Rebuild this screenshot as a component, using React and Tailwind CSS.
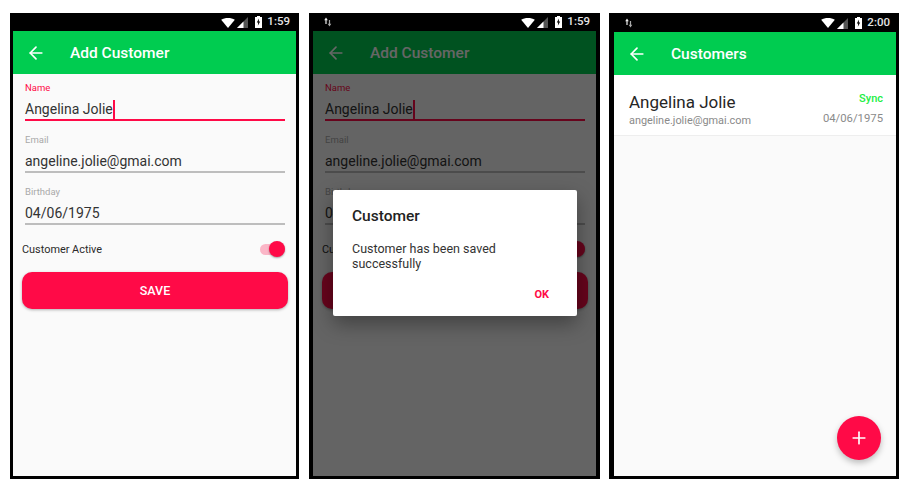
import React from 'react';
import { ArrowLeft, Plus } from 'lucide-react';

const StatusBar = ({ time, sync, className = '' }) => (
  <div className={`h-[18px] shrink-0 flex items-center justify-between bg-black text-[#e4e4e4] ${className}`}>
    <div className="pl-[11px]">
      {/* Data transfer arrows */}
      {sync && (
        <svg width="8" height="10" viewBox="0 0 8 10">
          <path d="M2 0.5 L0.2 3.2 H1.4 V7 H2.6 V3.2 H3.8 Z" fill="#eee" />
          <path d="M5.5 9.5 L3.7 6.8 H4.9 V3 H6.1 V6.8 H7.3 Z" fill="#aaa" />
        </svg>
      )}
    </div>
    <div className="flex items-center pr-[6px]">
      {/* Wifi */}
      <svg width="14" height="10" viewBox="0 0 15 11" className="mr-[2px] mt-[1px]">
        <path d="M0 1.8 C4 -0.6 11 -0.6 15 1.8 L7.5 11 Z" fill="#fff" />
      </svg>
      {/* Signal */}
      <svg width="11" height="11" viewBox="0 0 11 11" className="mr-[7px] mt-[1px]">
        <path d="M0 11 L11 0 V11 Z" fill="#555" />
        <path d="M0 11 L6.5 4.5 V11 Z" fill="#fff" />
      </svg>
      {/* Battery charging */}
      <svg width="7" height="12" viewBox="0 0 7 12" className="mr-[5px]">
        <path d="M2 0 H5 V1 H7 V12 H0 V1 H2 Z" fill="#fff" />
        <path d="M4 2.5 L1.8 6.6 H3.2 L2.8 9.8 L5.2 5.4 H3.8 Z" fill="#000" />
      </svg>
      <span className="text-[11.5px] leading-none font-medium w-[23px] text-right">{time}</span>
    </div>
  </div>
);

const AppBar = ({ title, className = '' }) => (
  <div className={`h-[43px] shrink-0 bg-[#00cc50] flex items-center text-white ${className}`}>
    <ArrowLeft className="w-[20px] h-[20px] ml-[13px]" strokeWidth={2} />
    <span className="ml-[24px] mt-[2px] text-[15.5px] font-medium leading-none">{title}</span>
  </div>
);

const Field = ({ label, value, active, caret }) => (
  <div className={`ml-[12px] w-[260px] ${active ? 'h-[40px]' : 'h-[52px]'} flex flex-col justify-end`}>
    <div className={`text-[9.5px] leading-[12px] ${active ? 'text-[#ff0a47]' : 'text-[#a9a9a9]'}`}>{label}</div>
    <div className="mt-[5px] h-[20px] flex items-center text-[14px] text-[#333] leading-none">
      {value}
      {caret && <span className="w-[2px] h-[19px] bg-[#ff0a47]" />}
    </div>
    <div className={`${active ? 'h-[2px] bg-[#ff0a47]' : 'h-[2px] bg-[#bdbdbd]'}`} />
  </div>
);

const CustomerForm = () => (
  <div className="flex-1 bg-[#fafafa] flex flex-col pt-[7px]">
    <Field label="Name" value="Angelina Jolie" active caret />
    <Field label="Email" value="angeline.jolie@gmai.com" />
    <Field label="Birthday" value="04/06/1975" />
    <div className="ml-[9px] mt-[15px] w-[263px] h-[20px] flex items-center justify-between">
      <span className="text-[10.9px] text-[#2a2a2a]">Customer Active</span>
      <div className="relative w-[25px] h-[11px] mb-[2px] rounded-full bg-[#fbb6c7]">
        <div className="absolute right-0 top-[-3px] w-[16px] h-[16px] rounded-full bg-[#ff0a47] shadow-[0_1px_2px_rgba(0,0,0,0.35)]" />
      </div>
    </div>
    <button className="ml-[9px] mt-[12px] w-[266px] h-[37px] pt-[2px] rounded-[10px] bg-[#ff0a47] text-white text-[12.5px] font-medium shadow-[0_1px_3px_rgba(0,0,0,0.3)]">
      SAVE
    </button>
  </div>
);

const Phone = ({ children, className = '' }) => (
  <div className={`relative h-[466px] bg-black flex flex-col overflow-hidden ${className}`}>
    {children}
  </div>
);

export default function App() {
  return (
    <div className="w-[909px] h-[492px] bg-white flex gap-[10px] pl-[10px] pt-[13px] font-['Roboto',sans-serif]">
      {/* Add customer */}
      <Phone className="w-[289px] pl-[3px] pr-[3px] pb-[3px]">
        <StatusBar time="1:59" />
        <AppBar title="Add Customer" />
        <CustomerForm />
      </Phone>

      {/* Saved dialog */}
      <Phone className="w-[291px] mr-[-1px] pl-[4px] pr-[4px] pb-[3px]">
        <StatusBar time="1:59" sync />
        <div className="relative flex-1 flex flex-col">
          <AppBar title="Add Customer" />
          <CustomerForm />
          <div className="absolute inset-0 bg-black/60" />
          <div className="absolute left-[20px] top-[159px] w-[244px] h-[126px] bg-white rounded-[2px] shadow-[0_8px_20px_rgba(0,0,0,0.35)] pl-[19px]">
            <div className="mt-[16px] text-[15.5px] leading-[20px] font-medium text-[#222]">Customer</div>
            <div className="mt-[15px] w-[180px] text-[12.5px] leading-[15px] text-[#333]">
              Customer has been saved successfully
            </div>
            <div className="absolute right-[28px] bottom-[15px] text-[11px] leading-[12px] font-bold text-[#ff0a47]">OK</div>
          </div>
        </div>
      </Phone>

      {/* Customer list */}
      <Phone className="w-[290px] pl-[5px] pr-[3px] pb-[3px]">
        <StatusBar time="2:00" sync className="h-[19px]" />
        <AppBar title="Customers" />
        <div className="relative flex-1 bg-[#fafafa]">
          <div className="h-[61px] bg-white border-b border-[#eeeeee] flex justify-between pl-[15px] pr-[13px] pt-[16px]">
            <div>
              <div className="text-[17px] leading-[22px] text-[#262626]">Angelina Jolie</div>
              <div className="mt-[1px] text-[10.9px] leading-[14px] text-[#8a8a8a]">angeline.jolie@gmai.com</div>
            </div>
            <div className="flex flex-col items-end">
              <div className="mt-[1px] text-[11px] leading-[14px] font-medium text-[#22ee44]">Sync</div>
              <div className="mt-[6px] text-[11.3px] leading-[14px] text-[#8a8a8a]">04/06/1975</div>
            </div>
          </div>
          <button className="absolute right-[15px] bottom-[16px] w-[44px] h-[44px] rounded-full bg-[#ff0a47] text-white flex items-center justify-center shadow-[0_3px_6px_rgba(0,0,0,0.25)]">
            <Plus className="w-[20px] h-[20px]" strokeWidth={2} />
          </button>
        </div>
      </Phone>
    </div>
  );
}
